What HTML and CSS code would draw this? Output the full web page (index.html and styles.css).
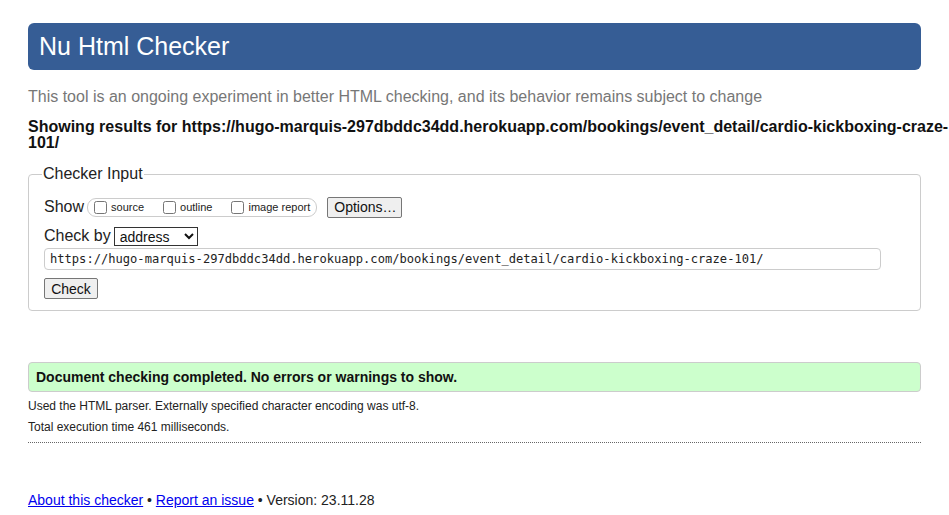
FILE: index.html
```html
<!DOCTYPE html>
<html lang="en">
<head>
<meta charset="utf-8">
<title>Showing results for https://hugo-marquis-297dbddc34dd.herokuapp.com/bookings/event_detail/cardio-kickboxing-craze-101/ - Nu Html Checker</title>
<link rel="stylesheet" href="styles.css">
</head>
<body>
<h1 class="title">Nu Html Checker</h1>
<p class="subtitle">This tool is an ongoing experiment in better HTML checking, and its behavior remains subject to change</p>
<h2 class="results">Showing results for https://hugo-marquis-297dbddc34dd.herokuapp.com/bookings/event_detail/cardio-kickboxing-craze-101/</h2>
<form class="checker">
  <fieldset class="input-box">
    <legend class="input-legend">Checker Input</legend>
    <div class="row row-show">
      <span class="row-label">Show</span>
      <fieldset class="show-options">
        <label class="opt"><input type="checkbox" class="cb">source</label>
        <label class="opt"><input type="checkbox" class="cb">outline</label>
        <label class="opt"><input type="checkbox" class="cb">image report</label>
      </fieldset>
      <button type="button" class="btn btn-options">Options…</button>
    </div>
    <div class="row row-by">
      <span class="row-label">Check by</span>
      <select class="sel">
        <option>address</option>
        <option>file upload</option>
        <option>text input</option>
      </select>
    </div>
    <input class="url" type="text" value="https://hugo-marquis-297dbddc34dd.herokuapp.com/bookings/event_detail/cardio-kickboxing-craze-101/">
    <div class="row">
      <button type="button" class="btn btn-check">Check</button>
    </div>
  </fieldset>
</form>
<p class="success">Document checking completed. No errors or warnings to show.</p>
<p class="details">Used the HTML parser. Externally specified character encoding was utf-8.</p>
<p class="details">Total execution time 461 milliseconds.</p>
<hr class="sep">
<p class="footer"><a href="#" class="link">About this checker</a> • <a href="#" class="link">Report an issue</a> • Version: 23.11.28</p>
</body>
</html>
```
FILE: styles.css
```css
html { background: #fff; }
body {
  margin: 0;
  padding: 23px 0 0 28px;
  font-family: "Liberation Sans", Arial, sans-serif;
  color: #222;
}
.title {
  margin: 0 28px 0 0;
  height: 47px;
  line-height: 47px;
  padding-left: 11px;
  background: #365d95;
  color: #fff;
  font-size: 25px;
  font-weight: normal;
  border-radius: 6px;
}
.subtitle {
  margin: 18px 0 0 0;
  font-size: 16px;
  line-height: 18px;
  color: #777;
}
.results {
  margin: 13px 0 0 0;
  font-size: 16px;
  line-height: 16px;
  font-weight: bold;
  color: #111;
}
.checker { margin: 14px 28px 0 0; }
.input-box {
  margin: 0;
  border: 1px solid #ccc;
  border-radius: 4px;
  padding: 8px 15px 11px 15px;
}
.input-legend {
  padding: 0 1px;
  margin-left: -2px;
  font-size: 16px;
  color: #222;
}
.row {
  display: flex;
  align-items: center;
}
.row-show { padding-top: 1px; }
.row-label {
  font-size: 16px;
  line-height: 30px;
  margin-right: 3px;
}
.row-by { margin-top: 1px; }
.row-by .row-label { line-height: 26px; }
.show-options {
  display: flex;
  align-items: center;
  margin: 0 10px 0 0;
  padding: 0 6px 0 6px;
  height: 19px;
  box-sizing: border-box;
  border: 1px solid #ccc;
  border-radius: 9px;
}
.opt {
  display: flex;
  align-items: center;
  font-size: 11px;
  line-height: 13px;
  color: #222;
  margin-right: 19px;
}
.opt:last-child { margin-right: 0; }
.cb {
  width: 13px;
  height: 13px;
  margin: 0 4px 0 0;
}
.btn {
  font-family: "Liberation Sans", Arial, sans-serif;
  font-size: 14px;
  background: #efefef;
  border: 1px solid #767676;
  border-radius: 2px;
  color: #111;
  height: 21px;
  padding: 0 6px;
}
.btn-options { width: 75px; }
.sel {
  font-family: "Liberation Sans", Arial, sans-serif;
  font-size: 14px;
  width: 84px;
  height: 19px;
  border: 1px solid #333;
  border-radius: 0;
  background: #fff;
  color: #111;
  padding: 0 0 0 1px;
}
.url {
  display: block;
  box-sizing: border-box;
  width: 837px;
  height: 22px;
  margin: -1px 0 8px 0;
  padding: 0 5px;
  border: 1px solid #ccc;
  border-radius: 4px;
  font-family: "DejaVu Sans Mono", "Liberation Mono", monospace;
  font-size: 12.1px;
  color: #222;
}
.btn-check { width: 54px; height: 21px; }
.success {
  margin: 51px 28px 0 0;
  box-sizing: border-box;
  height: 30px;
  line-height: 28px;
  padding-left: 7px;
  background: #ccffcc;
  border: 1px solid #ccc;
  border-radius: 4px;
  font-size: 14px;
  font-weight: bold;
  color: #111;
}
.details {
  margin: 7px 0 0 0;
  font-size: 12px;
  line-height: 14px;
  color: #222;
}
.details + .details { margin-top: 7px; }
.sep {
  margin: 8px 28px 0 0;
  border: 0;
  border-top: 1px dotted #666;
  height: 0;
}
.footer {
  margin: 49px 0 0 0;
  font-size: 14px;
  line-height: 16px;
  color: #222;
}
.link { color: #00e; text-decoration: underline; }
```
